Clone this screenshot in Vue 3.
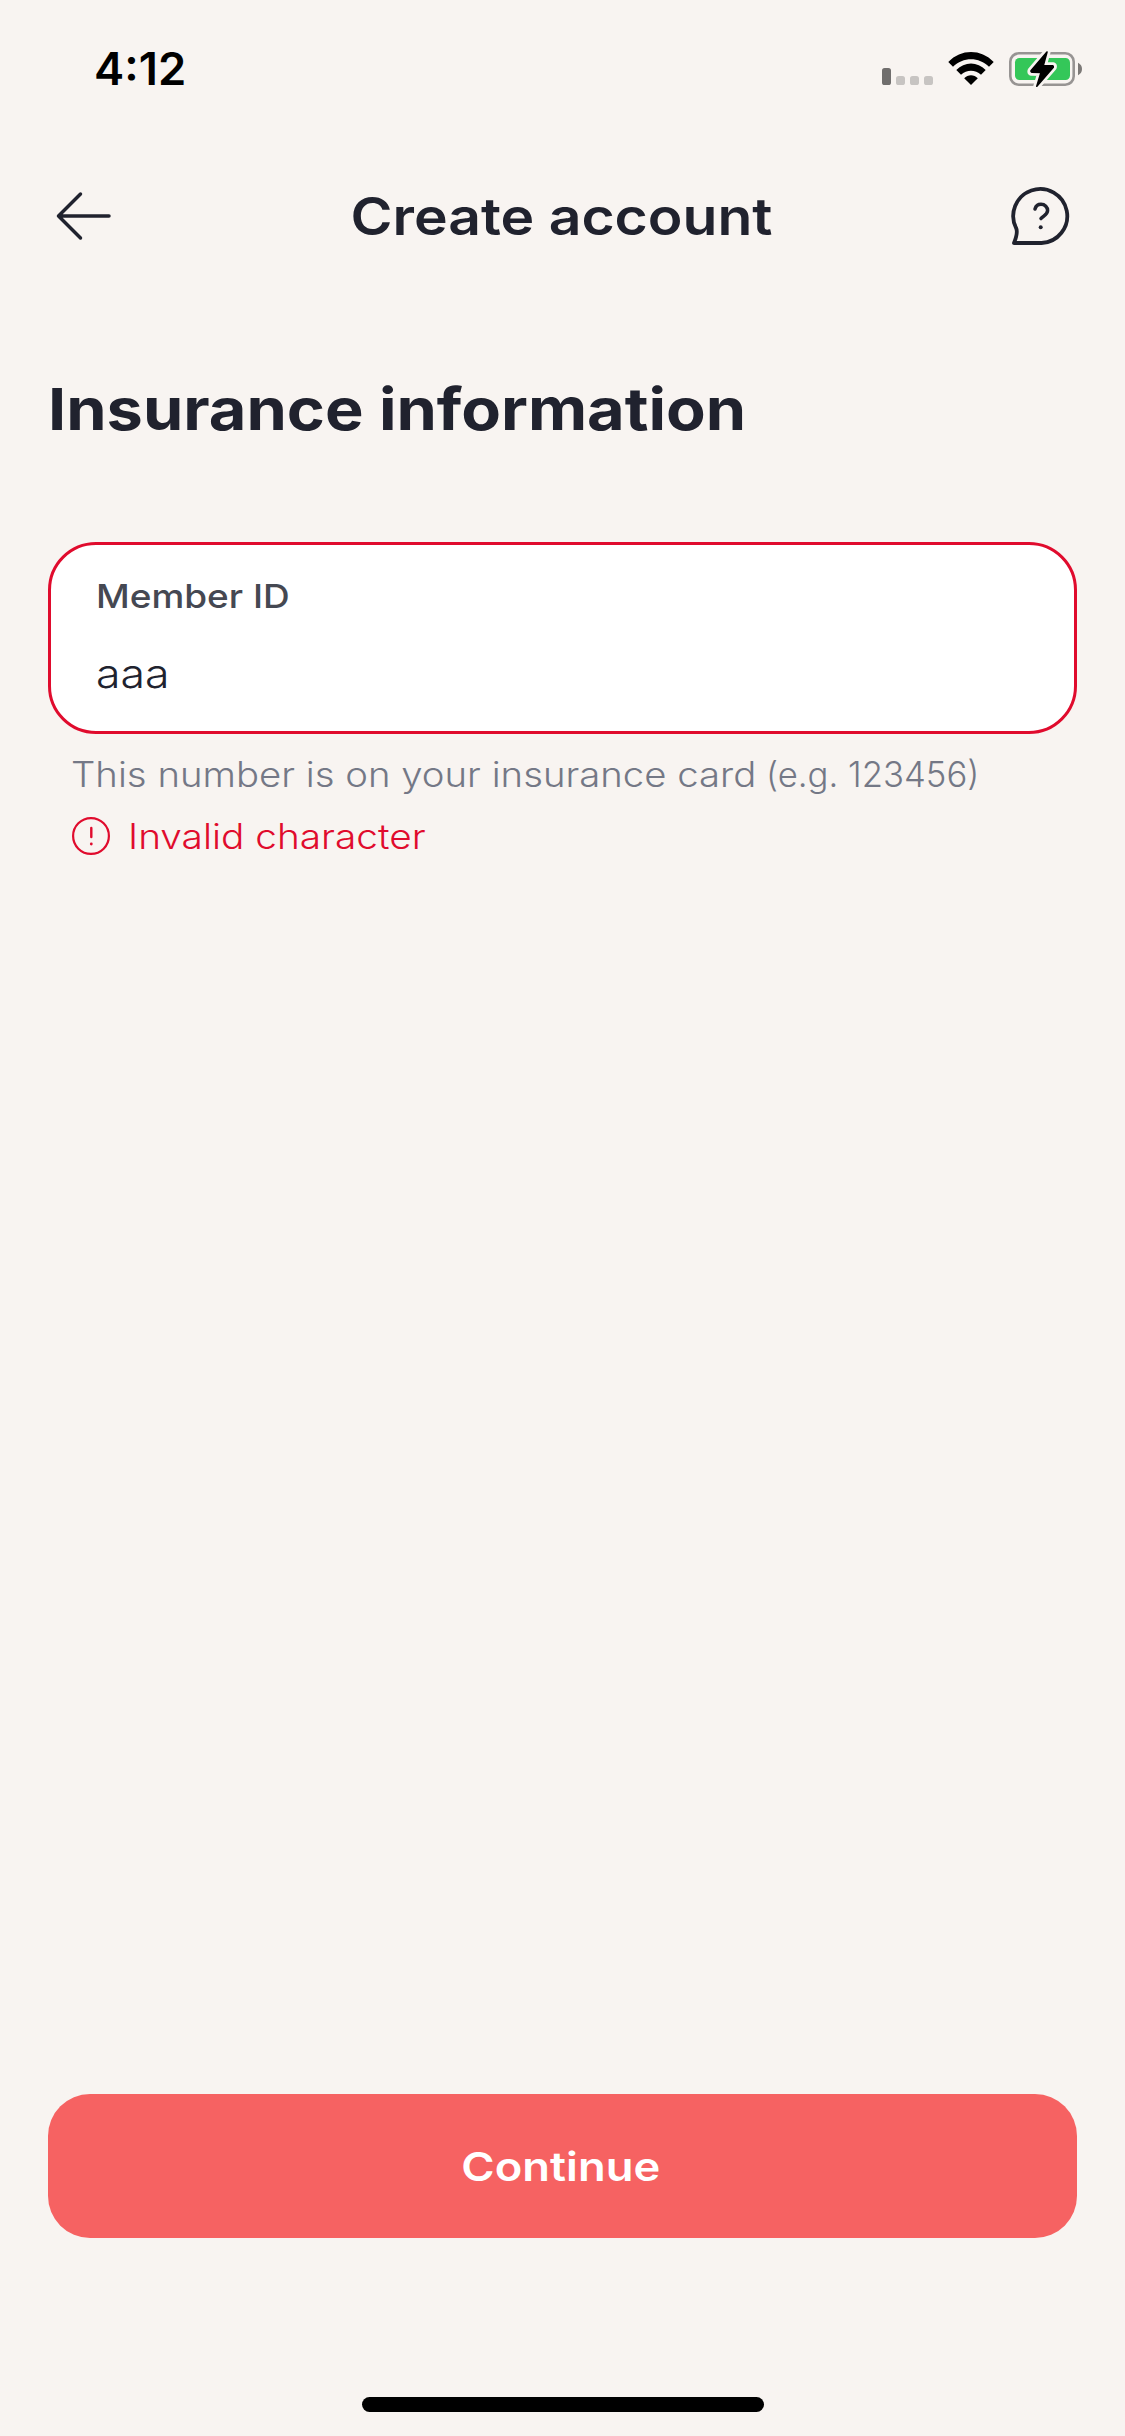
<script setup>
import { ref } from 'vue'

const memberId = ref('aaa')
</script>

<template>
  <main class="screen">
    <header class="status">
      <span class="time">4:12</span>
      <svg class="indicators" width="206" height="42" viewBox="880 48 206 42">
        <rect x="882" y="68" width="9" height="17" rx="2.6" fill="#706e6d" />
        <g fill="#c7c4c2">
          <rect x="896" y="76" width="9" height="9" rx="2.6" />
          <rect x="910" y="76" width="9" height="9" rx="2.6" />
          <rect x="924" y="76" width="9" height="9" rx="2.6" />
        </g>
        <path d="M948.3 62C961 48.7 981 48.7 993.7 62L989 66.8C979 56.8 963 56.8 953 66.8Z" />
        <path d="M956.3 70C964.5 61.3 977.5 61.3 985.7 70L981 74.8C975.3 69.3 966.7 69.3 961 74.8Z" />
        <path d="M964.2 78.2C968 74.3 974 74.3 977.8 78.2L971 85Z" />
        <rect x="1010.3" y="53.3" width="63.4" height="31.4" rx="8.5" fill="none" stroke="#979493" stroke-width="2.6" />
        <rect x="1015" y="58" width="55" height="22" rx="4.5" fill="#34c759" />
        <path d="M1078 62.8Q1082 64.8 1082 69T1078 75.2Z" fill="#7c7977" />
        <path class="bolt-halo" d="M1047 52L1031 70.8Q1030.7 72 1031.8 72.3L1041 72.5L1036.8 86.2L1053.3 67.2Q1053.6 66 1052.5 65.7L1043.3 65.5Z" />
        <path class="bolt" d="M1047 52L1031 70.8Q1030.7 72 1031.8 72.3L1041 72.5L1036.8 86.2L1053.3 67.2Q1053.6 66 1052.5 65.7L1043.3 65.5Z" />
      </svg>
    </header>

    <nav class="nav">
      <button class="icon-button" aria-label="Back">
        <svg width="60" height="52" viewBox="54 190 60 52">
          <path class="line" d="M109 216H58.5M80.5 194L58.5 216L80.5 238" />
        </svg>
      </button>
      <h1 class="title"><span>Create account</span></h1>
      <button class="icon-button" aria-label="Help">
        <svg width="64" height="64" viewBox="1008 184 64 64">
          <path class="line bubble" d="M1014 243H1041.5A27 27 0 1 0 1016.3 228.5C1018 233 1016 238 1014 243Z" />
          <path class="line" d="M1035 209C1036 205.5 1038.500 204.3 1041 204.3C1045 204.3 1047.6 207.3 1047.6 210.5C1047.6 214.8 1043 215.8 1041 218.6" />
          <circle cx="1040.7" cy="227.3" r="2" fill="#20222e" />
        </svg>
      </button>
    </nav>

    <h2 class="heading"><span>Insurance information</span></h2>

    <section class="form">
      <div class="field">
        <div class="label"><span>Member ID</span></div>
        <div class="value"><span>{{ memberId }}</span></div>
      </div>
      <p class="hint">
        <span class="hint-text">This number is on your insurance card</span>
        <span>(e.g. 123456)</span>
      </p>
      <p class="error">
        <svg width="38" height="38" viewBox="0 0 38 38">
          <circle cx="19" cy="19" r="17.9" fill="none" stroke="#e00b2d" stroke-width="2.2" />
          <path d="M19.3 11V20" stroke="#e00b2d" stroke-width="2.4" stroke-linecap="round" />
          <circle cx="19.3" cy="27" r="1.4" fill="#e00b2d" />
        </svg>
        <span>Invalid character</span>
      </p>
    </section>

    <footer class="footer">
      <button class="continue"><span>Continue</span></button>
      <div class="home-bar"></div>
    </footer>
  </main>
</template>

<style>
body {
  background: #f8f4f1;
}
</style>

<style scoped>
.screen {
  box-sizing: border-box;
  width: 1125px;
  height: 2436px;
  display: flex;
  flex-direction: column;
  background: #f8f4f1;
  color: #20222e;
  font-family: Inter, "Liberation Sans", sans-serif;
  overflow: hidden;
}
h1, h2, p { margin: 0; }
button { border: 0; padding: 0; background: none; color: inherit; font-family: inherit; }
svg { display: block; flex: none; }
span { display: inline-block; transform-origin: left center; white-space: nowrap; }

.status {
  height: 138px;
  display: flex;
  align-items: center;
  justify-content: space-between;
  padding: 0 39px 0 94px;
}
.time {
  color: #000;
  font-size: 44.5px;
  font-weight: 600;
  transform: scaleX(1.02);
}
.bolt-halo { stroke: #f8f4f1; stroke-width: 7px; stroke-linejoin: round; fill: #f8f4f1; }
.bolt { stroke: #000; stroke-width: 1.6px; stroke-linejoin: round; }

.nav {
  height: 156px;
  display: flex;
  align-items: center;
  justify-content: space-between;
  padding: 0 53px 0 54px;
}
.icon-button { width: 64px; }
.line { fill: none; stroke: #20222e; stroke-width: 3.5px; stroke-linecap: round; stroke-linejoin: round; }
.bubble { stroke-width: 3.8px; }
.title { margin-right: 2px; font-size: 51.5px; line-height: 66px; font-weight: 600; }
.title span { transform: scaleX(1.107); transform-origin: center; }

.heading {
  margin: 79px 0 0 48px;
  height: 72px;
  display: flex;
  font-size: 58px;
  line-height: 72px;
  font-weight: 700;
}
.heading span { transform: scaleX(1.118); }

.form { margin: 97px 48px 0; }
.field {
  box-sizing: border-box;
  height: 192px;
  padding: 30px 45px 0;
  border: 3px solid #e00b2d;
  border-radius: 48px;
  background: #fff;
}
.label { height: 42px; line-height: 42px; font-size: 33px; font-weight: 450; color: #454852; }
.label span { transform: scaleX(1.12); }
.value { margin-top: 30px; height: 54px; line-height: 54px; font-size: 40px; font-weight: 300; }
.value span { transform: scaleX(1.115); }
.hint {
  margin: 16px 0 0 23px;
  height: 48px;
  display: flex;
  line-height: 48px;
  font-size: 34.7px;
  font-weight: 300;
  color: #747886;
}
.hint-text { width: 695px; transform: scaleX(1.1045); }
.error {
  margin: 14px 0 0 24px;
  height: 48px;
  display: flex;
  align-items: center;
  gap: 18px;
  color: #e00b2d;
  font-size: 34.7px;
  line-height: 48px;
  font-weight: 300;
}
.error span { transform: scaleX(1.118); }

.footer { margin-top: auto; padding: 0 48px 24px; }
.continue {
  display: block;
  width: 100%;
  height: 144px;
  padding-right: 3px;
  border-radius: 42px;
  background: #f66262;
  color: #fff;
  font-size: 40px;
  font-weight: 600;
}
.continue span { transform: scaleX(1.133); transform-origin: center; }
.home-bar { width: 402px; height: 15px; margin: 159px auto 0; border-radius: 8px; background: #000; }
</style>
